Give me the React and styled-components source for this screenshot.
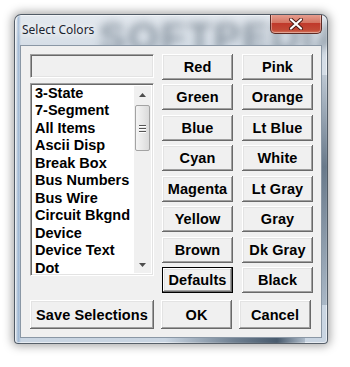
import React from "react";
import styled, { createGlobalStyle, css } from "styled-components";

const Global = createGlobalStyle`
  html, body { margin: 0; padding: 0; background: #ffffff; }
  body { width: 350px; height: 367px; overflow: hidden; }
`;

const Page = styled.div`
  padding: 14px 0 0 14px;
`;

const Window = styled.div`
  position: relative;
  width: 314px;
  height: 330px;
  box-sizing: border-box;
  border: 1px solid rgba(40, 50, 60, 0.75);
  border-radius: 7px 7px 4px 4px;
  background:
    linear-gradient(90deg, rgba(120,160,200,0.0) 0px, rgba(120,160,200,0.0) 2px, rgba(110,150,195,0.55) 3px, rgba(110,150,195,0.0) 6px),
    linear-gradient(180deg, #e4e9ef 0px, #d6dee7 30px, #c9d5e2 100%);
  box-shadow: 0 0 10px 2px rgba(0, 0, 0, 0.35), inset 0 0 0 1px rgba(255,255,255,0.55);
  display: flex;
  flex-direction: column;
  padding: 0 5px 5px 5px;
  overflow: hidden;
`;

const Glass = styled.div`
  position: absolute;
  left: 0;
  top: 0;
  right: 0;
  bottom: 0;
  pointer-events: none;
  overflow: hidden;

  &::before {
    content: "SOFTPEDIA";
    position: absolute;
    left: 84px;
    top: 0px;
    font: bold 40px "Liberation Sans", Arial, sans-serif;
    color: rgba(70, 85, 100, 0.55);
    filter: blur(4px);
    letter-spacing: 2px;
    white-space: nowrap;
  }
`;

const SideShade = styled.div`
  position: absolute;
  top: 60px;
  right: 0;
  width: 6px;
  height: 230px;
  background: linear-gradient(180deg, rgba(90,110,130,0.2), rgba(60,80,100,0.7) 40%, rgba(90,110,130,0.3));
`;

const BottomShade = styled.div`
  position: absolute;
  left: 150px;
  bottom: 0;
  width: 140px;
  height: 6px;
  background: linear-gradient(90deg, rgba(60,80,100,0), rgba(50,70,90,0.6) 50%, rgba(40,60,80,0.8) 80%, rgba(60,80,100,0.2));
`;

const TitleBar = styled.div`
  position: relative;
  height: 30px;
  display: flex;
  align-items: center;
  justify-content: space-between;
`;

const Title = styled.span`
  font: 12px "Noto Sans", "Open Sans", sans-serif;
  color: #1b2330;
  margin-left: 2px;
  margin-top: -1px;
  text-shadow: 0 0 6px rgba(255,255,255,0.95), 0 0 10px rgba(255,255,255,0.8);
`;

const CloseBtn = styled.div`
  align-self: flex-start;
  width: 52px;
  height: 20px;
  margin-top: -1px;
  box-sizing: border-box;
  border: 1px solid #5c2a24;
  border-top: none;
  border-radius: 0 0 5px 5px;
  background: linear-gradient(180deg, #e8a294 0%, #d47563 45%, #c0392b 50%, #c24a36 85%, #d77b62 100%);
  box-shadow: inset 0 0 0 1px rgba(255,255,255,0.35);
  display: flex;
  align-items: center;
  justify-content: center;
`;

const Client = styled.div`
  position: relative;
  flex: 1;
  background: #f0f0f0;
  box-sizing: border-box;
  border: 1px solid #8a97a5;
  padding: 8px 0 0 9px;
  display: flex;
  flex-direction: column;
`;

const Top = styled.div`
  display: flex;
  gap: 8px;
  height: 239px;
`;

const LeftCol = styled.div`
  width: 124px;
  display: flex;
  flex-direction: column;
  gap: 5px;
`;

const sunken = css`
  box-sizing: border-box;
  border-style: solid;
  border-width: 1px;
  border-color: #a0a0a0 #ffffff #ffffff #a0a0a0;
  box-shadow: inset 1px 1px 0 #696969, inset -1px -1px 0 #e3e3e3;
`;

const Preview = styled.div`
  ${sunken};
  height: 24px;
  background: #f0f0f0;
`;

const ListBox = styled.div`
  ${sunken};
  height: 193px;
  background: #ffffff;
  display: flex;
  padding: 0 2px 0 0;
`;

const Items = styled.ul`
  flex: 1;
  margin: 0;
  padding: 1px 0 0 4px;
  list-style: none;
  overflow: hidden;
`;

const Item = styled.li`
  font: bold 14.5px "Liberation Sans", Arial, sans-serif;
  line-height: 17.45px;
  color: #000;
  white-space: nowrap;
`;

const ScrollBar = styled.div`
  width: 17px;
  margin: 2px 0;
  background: #f0f0f0;
  display: flex;
  flex-direction: column;
  align-items: center;
  border-left: 1px solid #ffffff;
`;

const Arrow = styled.div`
  height: 17px;
  width: 17px;
  display: flex;
  align-items: center;
  justify-content: center;
`;

const Thumb = styled.div`
  width: 15px;
  height: 46px;
  margin-top: 2px;
  box-sizing: border-box;
  border: 1px solid #a3a3a3;
  border-radius: 2px;
  background: linear-gradient(90deg, #f4f4f4 0%, #e8e8e8 50%, #dadada 100%);
  display: flex;
  flex-direction: column;
  align-items: center;
  justify-content: center;
  gap: 2px;
`;

const Grip = styled.div`
  width: 7px;
  height: 1px;
  background: #555;
  box-shadow: 0 1px 0 #fff;
`;

const Track = styled.div`
  flex: 1;
`;

const ColorGrid = styled.div`
  display: grid;
  grid-template-columns: 71px 71px;
  grid-auto-rows: 26px;
  column-gap: 9px;
  row-gap: 4.43px;
`;

const Btn = styled.button`
  height: ${(p) => (p.$tall ? "29px" : "26px")};
  padding: 0;
  margin: 0;
  box-sizing: border-box;
  background: #f0f0f0;
  color: #000;
  font: bold 14.5px "Liberation Sans", Arial, sans-serif;
  letter-spacing: 0.1px;
  border: ${(p) => (p.$default ? "1px solid #000" : "none")};
  box-shadow: inset -1px -1px 0 #696969, inset 1px 1px 0 #ffffff,
    inset -2px -2px 0 #a0a0a0, inset 2px 2px 0 #e3e3e3;
  white-space: nowrap;
`;

const Bottom = styled.div`
  display: grid;
  grid-template-columns: 124px 71px 72px;
  column-gap: 7px;
  margin-top: 7px;
`;

const items = [
  "3-State",
  "7-Segment",
  "All Items",
  "Ascii Disp",
  "Break Box",
  "Bus Numbers",
  "Bus Wire",
  "Circuit Bkgnd",
  "Device",
  "Device Text",
  "Dot",
];

const colors = [
  "Red", "Pink",
  "Green", "Orange",
  "Blue", "Lt Blue",
  "Cyan", "White",
  "Magenta", "Lt Gray",
  "Yellow", "Gray",
  "Brown", "Dk Gray",
  "Defaults", "Black",
];

export default function App() {
  return (
    <>
      <Global />
      <Page>
        <Window>
          <Glass>
            <SideShade />
            <BottomShade />
          </Glass>
          <TitleBar>
            <Title>Select Colors</Title>
            <CloseBtn>
              <svg width="14" height="12" viewBox="0 0 14 12">
                <path d="M2 1.5 L12 10.5 M12 1.5 L2 10.5" stroke="#4a1a14" strokeWidth="4" strokeLinecap="round" />
                <path d="M2 1.5 L12 10.5 M12 1.5 L2 10.5" stroke="#ffffff" strokeWidth="2.2" strokeLinecap="round" />
              </svg>
            </CloseBtn>
          </TitleBar>
          <Client>
            <Top>
              <LeftCol>
                <Preview />
                <ListBox>
                  <Items>
                    {items.map((t) => (
                      <Item key={t}>{t}</Item>
                    ))}
                  </Items>
                  <ScrollBar>
                    <Arrow>
                      <svg width="7" height="4" viewBox="0 0 7 4">
                        <path d="M0 4 L3.5 0 L7 4 Z" fill="#4d4d4d" />
                      </svg>
                    </Arrow>
                    <Thumb>
                      <Grip />
                      <Grip />
                      <Grip />
                    </Thumb>
                    <Track />
                    <Arrow>
                      <svg width="7" height="4" viewBox="0 0 7 4">
                        <path d="M0 0 L3.5 4 L7 0 Z" fill="#4d4d4d" />
                      </svg>
                    </Arrow>
                  </ScrollBar>
                </ListBox>
              </LeftCol>
              <ColorGrid>
                {colors.map((c) => (
                  <Btn key={c} $default={c === "Defaults"}>
                    {c}
                  </Btn>
                ))}
              </ColorGrid>
            </Top>
            <Bottom>
              <Btn $tall>Save Selections</Btn>
              <Btn $tall>OK</Btn>
              <Btn $tall>Cancel</Btn>
            </Bottom>
          </Client>
        </Window>
      </Page>
    </>
  );
}
